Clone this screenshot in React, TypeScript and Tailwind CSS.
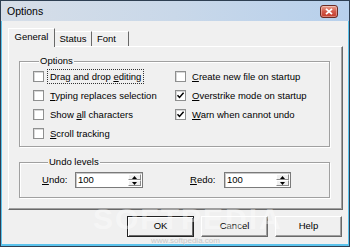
import React from "react";

const font = { fontFamily: '"Liberation Sans", Arial, sans-serif' };

function Check({ checked }: { checked?: boolean }) {
  return (
    <div className="w-[11px] h-[11px] shrink-0 border border-[#8e8f8f] bg-white shadow-[inset_1px_1px_0_#d8d8d8] flex items-center justify-center">
      {checked && (
        <svg width="9" height="9" viewBox="0 0 9 9">
          <path d="M1.5 4.2 L3.5 6.4 L7.6 1.8" fill="none" stroke="#000" strokeWidth="1.5" />
        </svg>
      )}
    </div>
  );
}

function Row({
  checked,
  children,
  focus,
}: {
  checked?: boolean;
  children: React.ReactNode;
  focus?: boolean;
}) {
  return (
    <div className="h-[19px] flex items-center gap-[5px]">
      <Check checked={checked} />
      <span
        className={
          "leading-[11px] px-[1px] " +
          (focus ? "outline outline-1 outline-dotted outline-[#333] outline-offset-[1px]" : "")
        }
      >
        {children}
      </span>
    </div>
  );
}

function Spin({ w }: { w: string }) {
  return (
    <div
      className={
        "h-[16px] flex border border-[#7a7a7a] bg-white shadow-[inset_1px_1px_0_#c8c8c8] " + w
      }
    >
      <div className="flex-1 pl-[2px] leading-[14px] text-[9.5px]">100</div>
      <div className="w-[13px] flex flex-col my-[1px] mr-[1px]">
        <div className="flex-1 bg-[#f0f0f0] border-t border-l border-white border-r border-b border-r-[#8a8a8a] border-b-[#8a8a8a] flex items-center justify-center">
          <svg width="5" height="3" viewBox="0 0 5 3">
            <path d="M0 3 L2.5 0 L5 3 Z" fill="#000" />
          </svg>
        </div>
        <div className="flex-1 bg-[#f0f0f0] border-t border-l border-white border-r border-b border-r-[#8a8a8a] border-b-[#8a8a8a] flex items-center justify-center">
          <svg width="5" height="3" viewBox="0 0 5 3">
            <path d="M0 0 L2.5 3 L5 0 Z" fill="#000" />
          </svg>
        </div>
      </div>
    </div>
  );
}

function Btn({ children, def }: { children: React.ReactNode; def?: boolean }) {
  return (
    <div
      className={
        "w-[67px] h-[21px] flex items-center justify-center text-[9.5px] bg-[#f0f0f0] " +
        (def
          ? "border border-[#222] shadow-[inset_1px_1px_0_#fff,inset_-1px_-1px_0_#696969]"
          : "border-t border-l border-white border-r border-b border-r-[#696969] border-b-[#696969] shadow-[inset_-1px_-1px_0_#a0a0a0]")
      }
    >
      {children}
    </div>
  );
}

export default function App() {
  return (
    <div
      className="w-[350px] h-[247px] border border-[#2e3f52] flex flex-col overflow-hidden relative text-black"
      style={font}
    >
      {/* Title bar */}
      <div className="h-[20px] shrink-0 flex items-center justify-between pl-[6px] pr-[11px] bg-gradient-to-r from-[#d6dee8] via-[#c9d8e9] to-[#b7d0ec]">
        <span className="text-[10.5px] leading-none">Options</span>
        <div className="w-[18px] h-[13px] rounded-[3px] border border-[#6b2a22] bg-gradient-to-b from-[#e9a18f] via-[#d2594a] to-[#c43b2a] flex items-center justify-center shadow-[inset_0_0_0_1px_rgba(255,255,255,0.35)]">
          <svg width="8" height="7" viewBox="0 0 8 7">
            <path d="M1 0.8 L7 6.2 M7 0.8 L1 6.2" stroke="#fff" strokeWidth="1.8" />
          </svg>
        </div>
      </div>

      {/* Client area */}
      <div className="flex-1 bg-[#f0f0f0] border-l border-r border-b-2 border-[#5cc3ec] flex flex-col pl-[6px] pr-[5px] pt-[7px] text-[9.5px]">
        {/* Tabs */}
        <div className="flex items-end h-[18px]">
          <div className="w-[47px] h-[19px] mb-[-1px] relative z-10 bg-[#f0f0f0] border-t border-l border-white border-r border-r-[#696969] flex items-center justify-center pb-[1px]">
            General
          </div>
          <div className="w-[37px] h-[15px] border-t border-white border-r border-r-[#696969] flex items-center justify-center">
            Status
          </div>
          <div className="w-[37px] h-[15px] border-t border-white border-r border-r-[#696969] flex items-center justify-start pl-[5px]">
            Font
          </div>
        </div>

        {/* Panel */}
        <div className="w-[335px] border-t border-l border-white border-r border-b border-r-[#696969] border-b-[#696969] shadow-[inset_-1px_-1px_0_#a0a0a0] pl-[10px] pr-[12px] pt-[8px] pb-[11px] flex flex-col">
          <fieldset className="border border-[#a0a0a0] shadow-[inset_1px_1px_0_#fff,1px_1px_0_#fff] pl-[13px] pb-[3px]">
            <legend className="ml-[6px] px-[1px] leading-[12px] bg-[#f0f0f0]">Options</legend>
            <div className="grid grid-cols-[142px_1fr]">
              <div className="flex flex-col">
                <Row focus>
                  Drag and drop <u>e</u>diting
                </Row>
                <Row>
                  <u>T</u>yping replaces selection
                </Row>
                <Row>
                  Show <u>a</u>ll characters
                </Row>
                <Row>
                  <u>S</u>croll tracking
                </Row>
              </div>
              <div className="flex flex-col">
                <Row>
                  <u>C</u>reate new file on startup
                </Row>
                <Row checked>
                  <u>O</u>verstrike mode on startup
                </Row>
                <Row checked>
                  <u>W</u>arn when cannot undo
                </Row>
              </div>
            </div>
          </fieldset>

          <fieldset className="mt-[9px] border border-[#a0a0a0] shadow-[inset_1px_1px_0_#fff,1px_1px_0_#fff] pl-[22px] pt-[4px] pb-[9px]">
            <legend className="ml-[6px] px-[1px] leading-[12px] bg-[#f0f0f0]">Undo levels</legend>
            <div className="flex items-center">
              <span className="w-[33px]">
                <u>U</u>ndo:
              </span>
              <Spin w="w-[68px]" />
              <span className="ml-[47px] w-[34px]">
                <u>R</u>edo:
              </span>
              <Spin w="w-[67px]" />
            </div>
          </fieldset>
        </div>

        {/* Buttons */}
        <div className="flex justify-end gap-[7px] mt-[6px] pr-[1px] w-[335px]">
          <Btn def>OK</Btn>
          <Btn>Cancel</Btn>
          <Btn>Help</Btn>
        </div>
      </div>

      {/* Watermark overlay */}
      <div className="absolute left-[92px] top-[203px] pointer-events-none text-[30px] font-bold tracking-[2px] text-white/40 leading-none">
        SOFTPEDIA
      </div>
      <div className="absolute left-[150px] top-[236px] pointer-events-none text-[8px] text-[#c8c8c8] leading-none">
        www.softpedia.com
      </div>
    </div>
  );
}
